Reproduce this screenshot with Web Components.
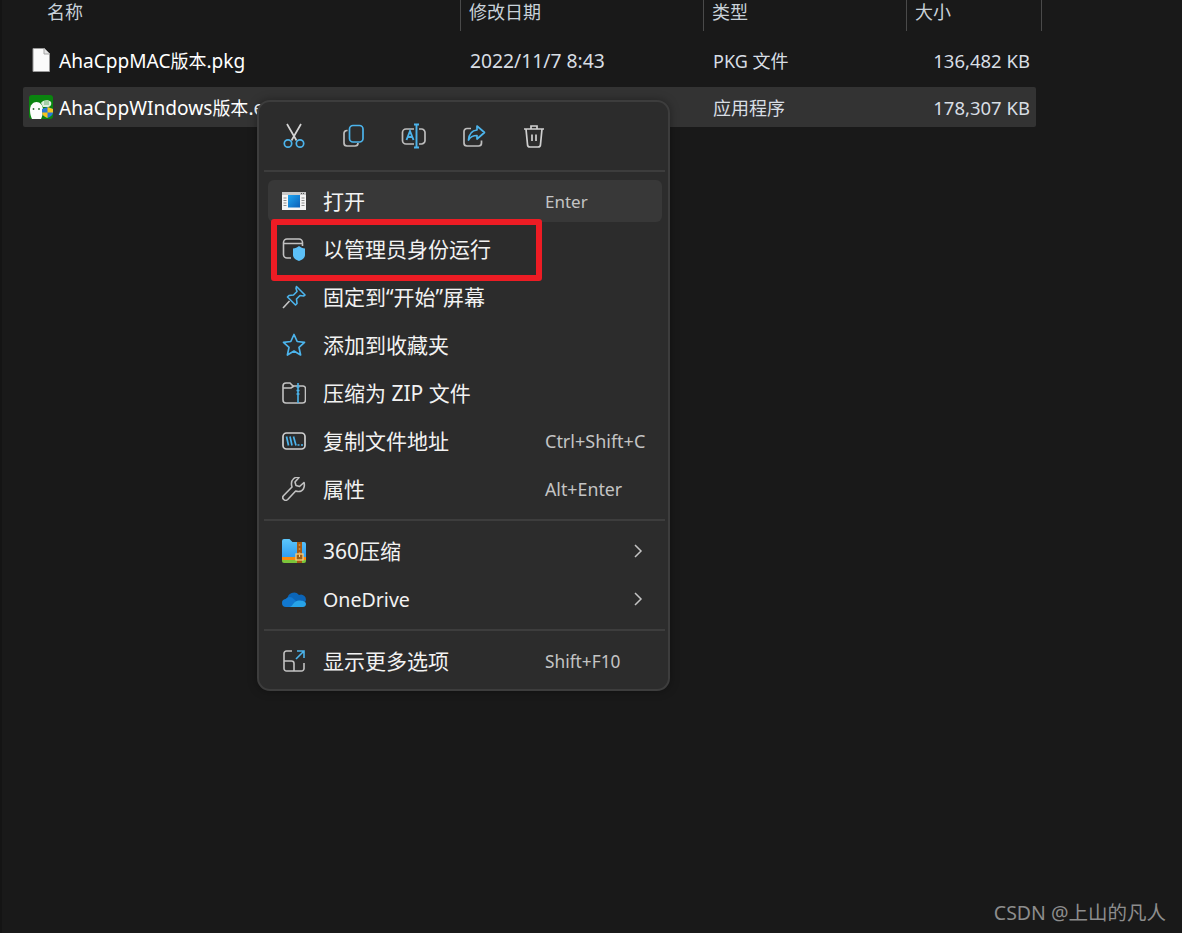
<!DOCTYPE html>
<html lang="zh-CN"><head><meta charset="utf-8"><title>Explorer</title>
<style>
html,body{margin:0;height:100%;background:#191919;overflow:hidden}
body{font-family:"Noto Sans","Noto Sans CJK SC",sans-serif;color:#fff}
</style></head><body>
<fm-app>
  <fm-header></fm-header>
  <fm-row name="AhaCppMAC|版本|.pkg" date="2022/11/7 8:43" type="PKG 文件" size="136,482 KB">
    <svg slot="icon" width="24" height="24" viewBox="0 0 24 24"><path d="M4 .5H15.500L20.500 5.500V23.500H4Z" fill="#fbfbfb" stroke="#9a9a9a"/><path d="M15 .5V6H20.500" fill="#e4e4e4" stroke="#a5a5a5"/></svg>
  </fm-row>
  <fm-row selected name="AhaCppWIndows|版本|.exe" date="" type="应用程序" size="178,307 KB">
    <svg slot="icon" width="24" height="24" viewBox="0 0 24 24"><rect width="24" height="24" rx="3" fill="#0a840f"/><path d="M1 15c0-5 3-8 6.500-8S14 10 14 15c0 4-1 7-2 9H3c-1-2-2-5-2-9Z" fill="#fcfcfc"/><path d="M12 8c1-3 8-4 10-1 1 3-1 5-4 5h-4Z" fill="#dfeedd"/><path d="M15 7h5M15 9h5" stroke="#4f9f55" stroke-width=".8"/><circle cx="4.500" cy="14" r=".9" fill="#2b6a2e"/><circle cx="10" cy="14" r=".9" fill="#2b6a2e"/><path d="M13 14l5.500-2 5.500 2v3.500c0 2.500-2.500 4.500-5.500 5.500-3-1-5.500-3-5.500-5.500Z" fill="#2a78d6"/><path d="M18.500 12l5.500 2v3.500h-5.500ZM13 17.500h5.500V23c-3-1-5.500-3-5.500-5.500Z" fill="#f6c51c"/></svg>
  </fm-row>
  <ctx-menu>
    <ctx-toolbar slot="toolbar">
      <svg width="24" height="26" viewBox="0 0 24 26" fill="none" stroke-width="1.700"><path d="M5 1l9.500 16.500M19 1L9.500 17.500" stroke="#d4d4d4"/><circle cx="6" cy="20.500" r="3.700" stroke="#4cb4ec"/><circle cx="18" cy="20.500" r="3.700" stroke="#4cb4ec"/></svg>
      <svg width="24" height="24" viewBox="0 0 24 24" fill="none" stroke-width="1.700"><path d="M5.600 6.500H5a3 3 0 0 0-3 3v9.500a3 3 0 0 0 3 3h8a3 3 0 0 0 3-3" stroke="#bdbdbd"/><rect x="7.500" y="1.500" width="13.500" height="16.500" rx="3.500" stroke="#4cb4ec"/></svg>
      <svg width="26" height="26" viewBox="0 0 26 26" fill="none" stroke-width="1.700"><path d="M13 6H5a3.500 3.500 0 0 0-3.500 3.500v8A3.500 3.500 0 0 0 5 21h8M18 6h2.500A3.500 3.500 0 0 1 24 9.500v8a3.500 3.500 0 0 1-3.500 3.500H18" stroke="#bdbdbd"/><path d="M13 1.500h5M13 24.500h5M15.500 1.500v23M5.500 17l3.500-9 3.500 9M6.500 14h5" stroke="#4cb4ec" stroke-width="1.900"/></svg>
      <svg width="24" height="24" viewBox="0 0 24 24" fill="none" stroke-width="1.700"><path d="M9 4.500H5a3 3 0 0 0-3 3V19a3 3 0 0 0 3 3h11.500a3 3 0 0 0 3-3v-2.500" stroke="#bdbdbd"/><path d="M15 2l7.500 6.500L15 15v-3.500c-4 0-6.500 1-8.500 4.500 .5-6 3.500-9.500 8.500-10Z" stroke="#4cb4ec" stroke-linejoin="round"/></svg>
      <svg width="24" height="24" viewBox="0 0 24 24" fill="none" stroke="#d0d0d0" stroke-width="1.700"><path d="M2 5h20M9 5V2h6v3M4 5l1.500 15.500A2.500 2.500 0 0 0 8 23h8a2.500 2.500 0 0 0 2.500-2.500L20 5M10 10.500v6.500M14 10.500v6.500"/></svg>
    </ctx-toolbar>
    <ctx-item hover label="打开" shortcut="Enter" sfs="17">
      <svg slot="icon" width="24" height="18" viewBox="0 0 24 18"><defs><linearGradient id="ob" x1="0" y1="0" x2="1" y2="1"><stop offset="0" stop-color="#1ea6f2"/><stop offset="1" stop-color="#0b5fb8"/></linearGradient></defs><rect width="24" height="18" fill="#f4f4f4"/><rect width="24" height="3" fill="#c8c8c8"/><path d="M19 1.500h1M21 1.500h1" stroke="#555"/><path d="M1.500 6h3M1.500 8.500h3M1.500 11h3M1.500 13.500h3M19.500 6h3M19.500 8.500h3M19.500 11h3M19.500 13.500h3" stroke="#8d8d8d"/><rect x="6" y="3" width="12" height="12.500" fill="url(#ob)"/></svg>
    </ctx-item>
    <ctx-item label="以管理员身份运行">
      <svg slot="icon" width="24" height="24" viewBox="0 0 24 24" fill="none"><path d="M9 21H5a3.500 3.500 0 0 1-3.500-3.500v-12A3.500 3.500 0 0 1 5 2h12a3.500 3.500 0 0 1 3.500 3.500V9M1.500 6.500h19" stroke="#c2c2c2" stroke-width="1.600"/><path d="M11 11.500c2.500 0 4-1 6-2.500 2 1.500 3.500 2.500 6 2.500v6.500c0 3-3 5-6 6-3-1-6-3-6-6Z" fill="#5cc0f7"/></svg>
    </ctx-item>
    <ctx-item label="固定到“开始”屏幕">
      <svg slot="icon" width="24" height="24" viewBox="0 0 24 24" fill="none" stroke-width="1.600"><path d="M14.500 1.500 23 10l-1.500 1-3.500-.5-3.500 3.500.5 4.500-1.500 1.500-8-8L7 10.500l4.500-.5L15 6.500l-1-3Z" stroke="#4cb4ec" stroke-linejoin="round"/><path d="M1 23l6.500-7" stroke="#c6c6c6"/></svg>
    </ctx-item>
    <ctx-item label="添加到收藏夹">
      <svg slot="icon" width="24" height="24" viewBox="0 0 24 24" fill="none"><path d="M12 1.500l3.200 7 7.300.8-5.500 5 1.600 7.700-6.600-3.900-6.600 3.900L7 14.300l-5.500-5 7.300-.8Z" stroke="#4cb4ec" stroke-width="1.700" stroke-linejoin="round"/></svg>
    </ctx-item>
    <ctx-item label="压缩为 ZIP 文件">
      <svg slot="icon" width="24" height="22" viewBox="0 0 24 22" fill="none" stroke-width="1.600"><path d="M1 5V4a3 3 0 0 1 3-3h4l3 3h10a2.500 2.500 0 0 1 2.500 2.500V18a3 3 0 0 1-3 3H4a3 3 0 0 1-3-3Z" stroke="#c2c2c2"/><path d="M1 6h8l3-2" stroke="#c2c2c2"/><path d="M16 1v20M14.500 5h3M14.500 8.500h3M14.500 12h3" stroke="#4cb4ec"/></svg>
    </ctx-item>
    <ctx-item label="复制文件地址" shortcut="Ctrl+Shift+C" sfs="18">
      <svg slot="icon" width="24" height="18" viewBox="0 0 24 18" fill="none"><rect x="1" y="1" width="22" height="16" rx="3.500" stroke="#cfcfcf" stroke-width="1.700"/><path d="M4.500 4.500l2 9M8 4.500l2 9M11.500 4.500l2.500 9" stroke="#4cb4ec" stroke-width="1.700"/><path d="M15.500 13h2M19 13h2" stroke="#4cb4ec" stroke-width="1.700"/></svg>
    </ctx-item>
    <ctx-item label="属性" shortcut="Alt+Enter" sfs="17.800">
      <svg slot="icon" width="24" height="24" viewBox="0 0 24 24" fill="none"><path d="M22 5.500l-4.500 4-3.500-1-1-3.500 4-4.500c-4-1-8 2-7.500 7 0 1 .2 1.500.5 2.500L1.700 18.500a2.800 2.800 0 0 0 4 4l8-8.500c1 .4 1.600.5 2.500.5 5 .3 7-4.500 5.800-9Z" stroke="#c2c2c2" stroke-width="1.600" stroke-linejoin="round"/></svg>
    </ctx-item>
    <ctx-sep></ctx-sep>
    <ctx-item label="360压缩" arrow>
      <svg slot="icon" width="24" height="24" viewBox="0 0 24 24"><defs><linearGradient id="zb" x1="0" y1="0" x2="0" y2="1"><stop offset="0" stop-color="#5cc6fb"/><stop offset="1" stop-color="#2f9df0"/></linearGradient></defs><path d="M0 2a2 2 0 0 1 2-2h5.500l3 3H22a2 2 0 0 1 2 2v13H0Z" fill="url(#zb)"/><path d="M0 18h24v3H0Z" fill="#f98a0c"/><path d="M0 21h24v1a2 2 0 0 1-2 2H2a2 2 0 0 1-2-2Z" fill="#7cc53a"/><rect x="15" y="3" width="5" height="21" fill="#a85a12"/><path d="M17.500 5v11" stroke="#d08a3c" stroke-width="1.500" stroke-dasharray="2 2"/><rect x="14" y="15" width="7" height="6" fill="#9c5e18" stroke="#f5cd80" stroke-width="1.300"/><path d="M17.500 15.500v2.500" stroke="#f5cd80"/></svg>
    </ctx-item>
    <ctx-item label="OneDrive" fs="19.600" arrow>
      <svg slot="icon" width="24" height="16" viewBox="0 0 24 16"><path d="M5.500 8.500a6.500 6.500 0 0 1 11.500-4.500 5 5 0 0 1 6.500 6.500L14 12Z" fill="#0b65b8"/><path d="M0 12a4 4 0 0 1 3.500-4A6 6 0 0 1 10 6.500L14 10l-5 6H4a4 4 0 0 1-4-4Z" fill="#1178d0"/><path d="M7 16c2 0 3-1.500 4-3 1.500-2 3.500-3.500 6-3.500 3 0 7 .5 7 3.500 0 2-1.500 3-3 3Z" fill="#27a3e8"/></svg>
    </ctx-item>
    <ctx-sep></ctx-sep>
    <ctx-item label="显示更多选项" shortcut="Shift+F10" sfs="17.300">
      <svg slot="icon" width="22" height="22" viewBox="0 0 22 22" fill="none" stroke-width="1.600"><path d="M9 1H3.500A2.500 2.500 0 0 0 1 3.500v15A2.500 2.500 0 0 0 3.500 21h15a2.500 2.500 0 0 0 2.500-2.500V13M1 11h7.500a2.500 2.500 0 0 1 2.500 2.500V21" stroke="#c2c2c2"/><path d="M13 9l8-8M14 1h7v7" stroke="#4cb4ec"/></svg>
    </ctx-item>
  </ctx-menu>
  <red-box></red-box>
  <water-mark>CSDN @上山的凡人</water-mark>
</fm-app>
<script>
const FONT='"Noto Sans","Noto Sans CJK SC",sans-serif';
function def(name,html,init){customElements.define(name,class extends HTMLElement{connectedCallback(){if(this.shadowRoot)return;const s=this.attachShadow({mode:'open'});s.innerHTML=typeof html==='function'?html(this):html;if(init)init(this,s);}});}
const esc=t=>(t||'').replace(/&/g,'&amp;').replace(/</g,'&lt;');
def('fm-app',`<style>:host{display:block;position:relative;width:1182px;height:933px;box-sizing:border-box;background:#191919;border-left:2px solid #141414;overflow:hidden;font-family:${FONT}}
.list{display:flex;flex-direction:column;gap:7px;padding:9px 0 0 21px}</style><slot name="h"></slot><div class="list"><slot></slot></div>`);
def('fm-header',`<style>:host{display:grid;grid-template-columns:459px 243px 203px 135px;height:31px;font-size:18px;color:#c9d2da}
div{border-right:1px solid #4a4a4a;box-sizing:border-box;line-height:24px;padding-left:8px}
.f{padding-left:45px}</style><div class="f">名称</div><div>修改日期</div><div>类型</div><div>大小</div>`,el=>{el.slot='h'});
def('fm-row',e=>{const [a,b,c]=(e.getAttribute('name')||'').split('|');return `<style>:host{display:grid;grid-template-columns:439px 243px 203px 128px;height:40px;width:1013px;align-items:center;border-radius:2px;font-size:18.500px;color:#d8dee4}
:host([selected]){background:#333}
.n{display:flex;align-items:center;font-size:19.100px;color:#fff;white-space:nowrap;overflow:hidden}
.c{font-size:18px}
.i{width:24px;height:24px;margin:0 6px;flex:none;display:flex;align-items:center;justify-content:center}
.d{font-size:19.300px}.t{font-size:18px}
.d,.t{padding-left:8px;white-space:nowrap}.s{text-align:right;padding-right:6px;white-space:nowrap}</style>
<div class="n"><span class="i"><slot name="icon"></slot></span><span>${esc(a)}<span class="c">${esc(b)}</span>${esc(c)}</span></div>
<div class="d">${esc(e.getAttribute('date'))}</div><div class="t">${esc(e.getAttribute('type'))}</div><div class="s">${esc(e.getAttribute('size'))}</div>`});
def('ctx-menu',`<style>:host{position:absolute;left:255px;top:100px;width:413px;height:591px;box-sizing:border-box;background:#2c2c2c;border:2px solid #3d3d3d;border-radius:13px;box-shadow:0 0 10px rgba(0,0,0,.35);display:flex;flex-direction:column}
.tb{height:68px;border-bottom:2px solid #3d3d3d;margin:0 3px 0 5px;}
.items{display:flex;flex-direction:column;gap:6px;padding-top:8px}</style>
<div class="tb"><slot name="toolbar"></slot></div><div class="items"><slot></slot></div>`);
def('ctx-toolbar',`<style>:host{display:flex;height:68px;align-items:center;width:max-content}
.w{display:grid;grid-auto-flow:column;grid-auto-columns:60px;justify-items:center;align-items:center}</style><div class="w"><slot></slot></div>`);
def('ctx-item',e=>`<style>:host{display:grid;grid-template-columns:55px 222px 1fr;height:42px;margin:0 6px 0 9px;align-items:center;border-radius:6px;font-size:21px;color:#f2f2f2;white-space:pre}
:host([hover]){background:#383838}
.i{display:flex;justify-content:center;width:52px}
.l{padding-bottom:2px}
.s{color:#c4c4c4;white-space:nowrap;font-size:${e.getAttribute('sfs')||'17.500'}px}
.a{justify-self:end;margin-right:19px;display:block}</style>
<div class="i"><slot name="icon"></slot></div><div class="l" style="${e.hasAttribute('fs')?`font-size:${e.getAttribute('fs')}px;padding-bottom:0`:''}">${esc(e.getAttribute('label'))}</div>
${e.hasAttribute('arrow')?'<svg class="a" width="10" height="16" viewBox="0 0 10 16" fill="none" stroke="#c4c4c4" stroke-width="1.500"><path d="M2 2l6 6-6 6"/></svg>':`<div class="s">${esc(e.getAttribute('shortcut'))}</div>`}`);
def('ctx-sep',`<style>:host{display:block;height:2px;background:#3d3d3d;margin:3px 3px 3px 5px}</style>`);
def('red-box',`<style>:host{position:absolute;left:269px;top:219px;width:271px;height:62px;box-sizing:border-box;border:6px solid #ed1c24;border-radius:3px}</style>`);
def('water-mark',`<style>:host{position:absolute;right:16px;top:897px;font-size:19.500px;color:#8d8d8d;white-space:nowrap}</style><slot></slot>`);
</script>
</body></html>
